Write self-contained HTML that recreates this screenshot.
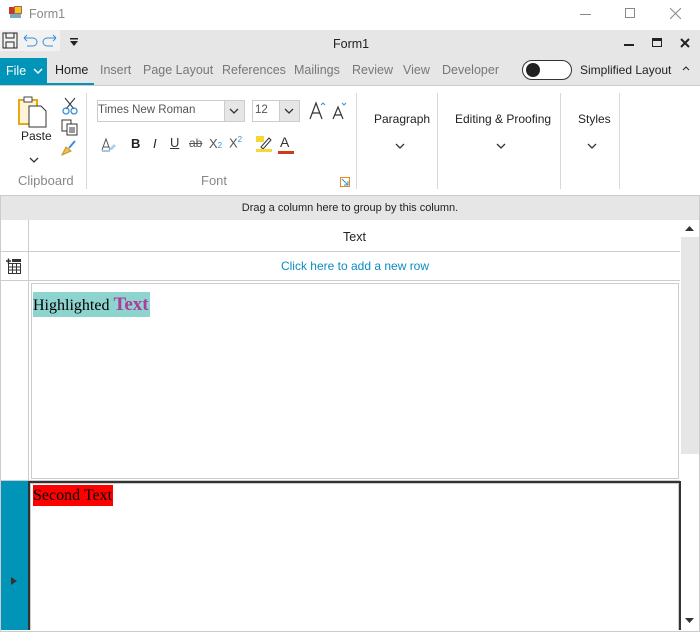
<!DOCTYPE html>
<html><head><meta charset="utf-8"><style>
*{margin:0;padding:0;box-sizing:border-box}
body{width:700px;height:632px;background:#fff;font-family:"Segoe UI","Liberation Sans",sans-serif;position:relative;overflow:hidden;font-size:12px;color:#222}
.a{position:absolute}
.t{position:absolute;white-space:nowrap}
.tab{position:absolute;top:63px;font-size:12.5px;color:#777}
.sep{position:absolute;top:93px;width:1px;height:96px;background:#d8d8d8}
</style></head><body>
<!-- title bar -->
<div class="a" style="left:9px;top:7px;width:7px;height:7px;background:#c0392b"></div>
<div class="a" style="left:14px;top:6px;width:8px;height:8px;background:#f3c614;border:1px solid #a66"></div>
<div class="a" style="left:10px;top:14px;width:11px;height:4px;background:#7ab"></div>
<div class="t" style="left:29px;top:7px;font-size:12.5px;color:#888">Form1</div>
<div class="a" style="left:580px;top:14px;width:11px;height:1px;background:#888"></div>
<div class="a" style="left:625px;top:8px;width:10px;height:10px;border:1px solid #888"></div>
<svg class="a" style="left:670px;top:8px" width="11" height="11"><path d="M0 0L11 11M11 0L0 11" stroke="#888" stroke-width="1"/></svg>
<!-- ribbon caption -->
<div class="a" style="left:0;top:30px;width:700px;height:56px;background:#e6e6e6;border-bottom:1px solid #ccc"></div>
<div class="a" style="left:0;top:30px;width:60px;height:21px;background:#f2f2f2"></div>
<svg class="a" style="left:2px;top:32px" width="16" height="17"><rect x="1" y="1" width="14" height="15" fill="none" stroke="#222"/><rect x="4" y="1" width="8" height="5" fill="none" stroke="#222"/><rect x="4" y="10" width="8" height="6" fill="none" stroke="#222"/></svg>
<svg class="a" style="left:21px;top:32px" width="38" height="16"><path d="M3 6h9a4 4 0 010 8H6M3 6l3-3M3 6l3 3" fill="none" stroke="#3a8fd6"/><path d="M35 6h-9a4 4 0 000 8h6M35 6l-3-3M35 6l-3 3" fill="none" stroke="#3a8fd6"/></svg>
<svg class="a" style="left:69px;top:38px" width="10" height="9"><rect x="1" y="0" width="8" height="1.5" fill="#222"/><path d="M1 3h8l-4 5z" fill="#222"/></svg>
<div class="t" style="left:333px;top:37px;font-size:12.5px;color:#222">Form1</div>
<div class="a" style="left:624px;top:44px;width:10px;height:2px;background:#222"></div>
<div class="a" style="left:652px;top:38px;width:10px;height:9px;border:1px solid #222;border-top-width:3px"></div>
<svg class="a" style="left:680px;top:38px" width="10" height="10"><path d="M1 1L9 9M9 1L1 9" stroke="#222" stroke-width="2"/></svg>
<!-- tabs -->
<div class="a" style="left:0;top:58px;width:47px;height:27px;background:#0095b8"></div>
<div class="t" style="left:6px;top:64px;color:#fff;font-size:12.5px">File</div>
<svg class="a" style="left:33px;top:68px" width="10" height="6"><path d="M1 1l4 4 4-4" fill="none" stroke="#fff" stroke-width="1.5"/></svg>
<div class="a" style="left:47px;top:83px;width:47px;height:2px;background:#0095b8"></div>
<div class="tab" style="left:55px;color:#222">Home</div>
<div class="tab" style="left:100px">Insert</div>
<div class="tab" style="left:143px">Page Layout</div>
<div class="tab" style="left:222px">References</div>
<div class="tab" style="left:294px">Mailings</div>
<div class="tab" style="left:352px">Review</div>
<div class="tab" style="left:403px">View</div>
<div class="tab" style="left:442px">Developer</div>
<div class="a" style="left:522px;top:60px;width:50px;height:20px;border:1px solid #333;border-radius:10px;background:#fff"></div>
<div class="a" style="left:526px;top:63px;width:14px;height:14px;border-radius:7px;background:#222"></div>
<div class="t" style="left:580px;top:63px;color:#222;font-size:12px">Simplified Layout</div>
<svg class="a" style="left:682px;top:66px" width="8" height="5"><path d="M1 4l3-3 3 3" fill="none" stroke="#222"/></svg>
<!-- ribbon body -->
<div class="a" style="left:0;top:195px;width:700px;height:1px;background:#ccc"></div>
<svg class="a" style="left:18px;top:96px" width="32" height="32"><rect x="1" y="4" width="18" height="24" fill="#fff4d6" stroke="#e6a817" stroke-width="2"/><rect x="6" y="1" width="8" height="5" fill="#fff" stroke="#444"/><path d="M11 10h12l5 5v16H11z" fill="#fff" stroke="#333"/></svg>
<div class="t" style="left:21px;top:129px;color:#222">Paste</div>
<svg class="a" style="left:29px;top:157px" width="10" height="6"><path d="M1 1l4 4 4-4" fill="none" stroke="#333" stroke-width="1.3"/></svg>
<svg class="a" style="left:62px;top:97px" width="16" height="18"><path d="M3 1l9 11M13 1L4 12" stroke="#333"/><circle cx="4" cy="14" r="3" fill="none" stroke="#3a8fd6" stroke-width="1.3"/><circle cx="12" cy="14" r="3" fill="none" stroke="#3a8fd6" stroke-width="1.3"/></svg>
<svg class="a" style="left:61px;top:119px" width="18" height="17"><rect x="1" y="1" width="9" height="11" fill="#fff" stroke="#333"/><rect x="6" y="5" width="10" height="11" fill="#fff" stroke="#333"/><path d="M8 9h6M8 11h6M8 13h6" stroke="#333"/></svg>
<svg class="a" style="left:60px;top:140px" width="18" height="17"><path d="M2 15l4-8 5 4z" fill="#f2c14a" stroke="#c8902a"/><path d="M9 8l6-7" stroke="#3a8fd6" stroke-width="2"/></svg>
<div class="t" style="left:18px;top:173px;color:#888;font-size:13px">Clipboard</div>
<div class="sep" style="left:86px"></div>
<div class="a" style="left:97px;top:100px;width:148px;height:22px;border:1px solid #ccc;background:#fff"></div>
<div class="t" style="left:98px;top:104px;color:#555;font-size:11.5px">Times New Roman</div>
<div class="a" style="left:224px;top:101px;width:20px;height:20px;background:#e6e6e6;border-left:1px solid #ccc"></div>
<svg class="a" style="left:229px;top:108px" width="10" height="6"><path d="M1 1l4 4 4-4" fill="none" stroke="#333" stroke-width="1.3"/></svg>
<div class="a" style="left:252px;top:100px;width:48px;height:22px;border:1px solid #ccc;background:#fff"></div>
<div class="t" style="left:255px;top:104px;color:#555;font-size:11.5px">12</div>
<div class="a" style="left:279px;top:101px;width:20px;height:20px;background:#e6e6e6;border-left:1px solid #ccc"></div>
<svg class="a" style="left:284px;top:108px" width="10" height="6"><path d="M1 1l4 4 4-4" fill="none" stroke="#333" stroke-width="1.3"/></svg>
<svg class="a" style="left:309px;top:100px" width="42" height="20"><path d="M1 19L7 3l6 16M3 13h8" fill="none" stroke="#333" stroke-width="1.2"/><path d="M12 5l2-2 2 2" fill="none" stroke="#3a8fd6"/><path d="M24 19l5-12 5 12M26 15h6" fill="none" stroke="#333" stroke-width="1.2"/><path d="M33 3l2 2 2-2" fill="none" stroke="#3a8fd6"/></svg>
<svg class="a" style="left:101px;top:137px" width="16" height="16"><path d="M1 13L5 2l4 11M2 10h6" fill="none" stroke="#555"/><path d="M8 12l5-5 2 2-4 4z" fill="#a9d2f0"/><path d="M1 14h8" stroke="#3a8fd6"/></svg>
<div class="t" style="left:131px;top:136px;font-weight:bold;font-size:13px;color:#222">B</div>
<div class="t" style="left:153px;top:136px;font-style:italic;font-size:13px;color:#222">I</div>
<div class="t" style="left:170px;top:135px;text-decoration:underline;font-size:13px;color:#333">U</div>
<div class="t" style="left:189px;top:136px;text-decoration:line-through;font-size:12px;color:#555">ab</div>
<div class="t" style="left:209px;top:136px;font-size:13px;color:#555">X<span style="font-size:8px;color:#3a8fd6">2</span></div>
<div class="t" style="left:229px;top:135px;font-size:13px;color:#555">X<sup style="font-size:8px;color:#3a8fd6">2</sup></div>
<svg class="a" style="left:255px;top:135px" width="18" height="18"><rect x="1" y="1" width="8" height="6" fill="#f6d736"/><path d="M6 12L14 3l2 2-8 9z" fill="none" stroke="#333"/><rect x="1" y="14" width="16" height="3" fill="#f6d736"/></svg>
<div class="t" style="left:280px;top:134px;font-size:14px;color:#333">A</div>
<div class="a" style="left:278px;top:151px;width:16px;height:3px;background:#d03a1a"></div>
<div class="t" style="left:201px;top:173px;color:#888;font-size:13px">Font</div>
<svg class="a" style="left:340px;top:177px" width="10" height="10"><rect x="0.5" y="0.5" width="9" height="9" fill="none" stroke="#e68a1e"/><path d="M2 2l6 6M8 4v4H4" fill="none" stroke="#3a8fd6"/></svg>
<div class="sep" style="left:356px"></div>
<div class="t" style="left:374px;top:112px;color:#222">Paragraph</div>
<svg class="a" style="left:395px;top:143px" width="10" height="6"><path d="M1 1l4 4 4-4" fill="none" stroke="#333" stroke-width="1.3"/></svg>
<div class="sep" style="left:437px"></div>
<div class="t" style="left:455px;top:112px;color:#222">Editing &amp; Proofing</div>
<svg class="a" style="left:496px;top:143px" width="10" height="6"><path d="M1 1l4 4 4-4" fill="none" stroke="#333" stroke-width="1.3"/></svg>
<div class="sep" style="left:560px"></div>
<div class="t" style="left:578px;top:112px;color:#222">Styles</div>
<svg class="a" style="left:587px;top:143px" width="10" height="6"><path d="M1 1l4 4 4-4" fill="none" stroke="#333" stroke-width="1.3"/></svg>
<div class="sep" style="left:619px"></div>
<!-- grid -->
<div class="a" style="left:0;top:196px;width:700px;height:436px;border:1px solid #ccc;border-top:none"></div>
<div class="a" style="left:1px;top:196px;width:698px;height:24px;background:#e6e6e6"></div>
<div class="t" style="left:0;width:700px;text-align:center;top:202px;font-size:11px;color:#222">Drag a column here to group by this column.</div>
<div class="a" style="left:28px;top:220px;width:1px;height:260px;background:#ccc"></div>
<div class="a" style="left:1px;top:251px;width:679px;height:1px;background:#ccc"></div>
<div class="a" style="left:1px;top:280px;width:679px;height:1px;background:#ccc"></div>
<div class="t" style="left:343px;top:230px;font-size:12.5px;color:#222">Text</div>
<svg class="a" style="left:6px;top:258px" width="16" height="16"><path d="M0 3h5M2.5 0.5v5" stroke="#333" stroke-width="1.5"/><rect x="6" y="1" width="9" height="3" fill="#333"/><rect x="2.5" y="5.5" width="12" height="10" fill="none" stroke="#333"/><path d="M2.5 9h12M2.5 12h12M6.5 5.5v10M10.5 5.5v10" stroke="#333"/></svg>
<div class="t" style="left:0;width:710px;text-align:center;top:259px;font-size:12px;color:#0a8cc4">Click here to add a new row</div>
<div class="a" style="left:31px;top:283px;width:648px;height:196px;border:1px solid #ccc"></div>
<div class="t" style="left:33px;top:292px;background:#8dd4cf;font-family:'Liberation Serif',serif;font-size:16px;line-height:25px;height:25px;padding-right:1px;color:#000">Highlighted <span style="color:#b1399a;font-weight:bold;font-size:19px">Text</span></div>
<div class="a" style="left:1px;top:480px;width:679px;height:1px;background:#ccc"></div>
<div class="a" style="left:1px;top:481px;width:27px;height:149px;background:#0095b8"></div>
<svg class="a" style="left:11px;top:577px" width="6" height="8"><path d="M0 0l6 4-6 4z" fill="#333"/></svg>
<div class="a" style="left:28px;top:481px;width:2px;height:149px;background:#333"></div>
<div class="a" style="left:28px;top:481px;width:653px;height:2px;background:#333"></div>
<div class="a" style="left:679px;top:481px;width:2px;height:149px;background:#333"></div>
<div class="a" style="left:30px;top:483px;width:649px;height:147px;border:1px solid #ccc;border-bottom:none"></div>
<div class="t" style="left:33px;top:485px;background:#ff0000;font-family:'Liberation Serif',serif;font-size:16px;line-height:21px;height:21px;padding-right:1px;color:#000">Second Text</div>
<!-- scrollbar -->
<div class="a" style="left:681px;top:221px;width:18px;height:410px;background:#fff"></div>
<div class="a" style="left:681px;top:237px;width:18px;height:217px;background:#e6e6e6"></div>
<svg class="a" style="left:685px;top:226px" width="9" height="6"><path d="M0 5h9L4.5 0z" fill="#333"/></svg>
<svg class="a" style="left:685px;top:618px" width="9" height="5"><path d="M0 0h9L4.5 5z" fill="#333"/></svg>
</body></html>
